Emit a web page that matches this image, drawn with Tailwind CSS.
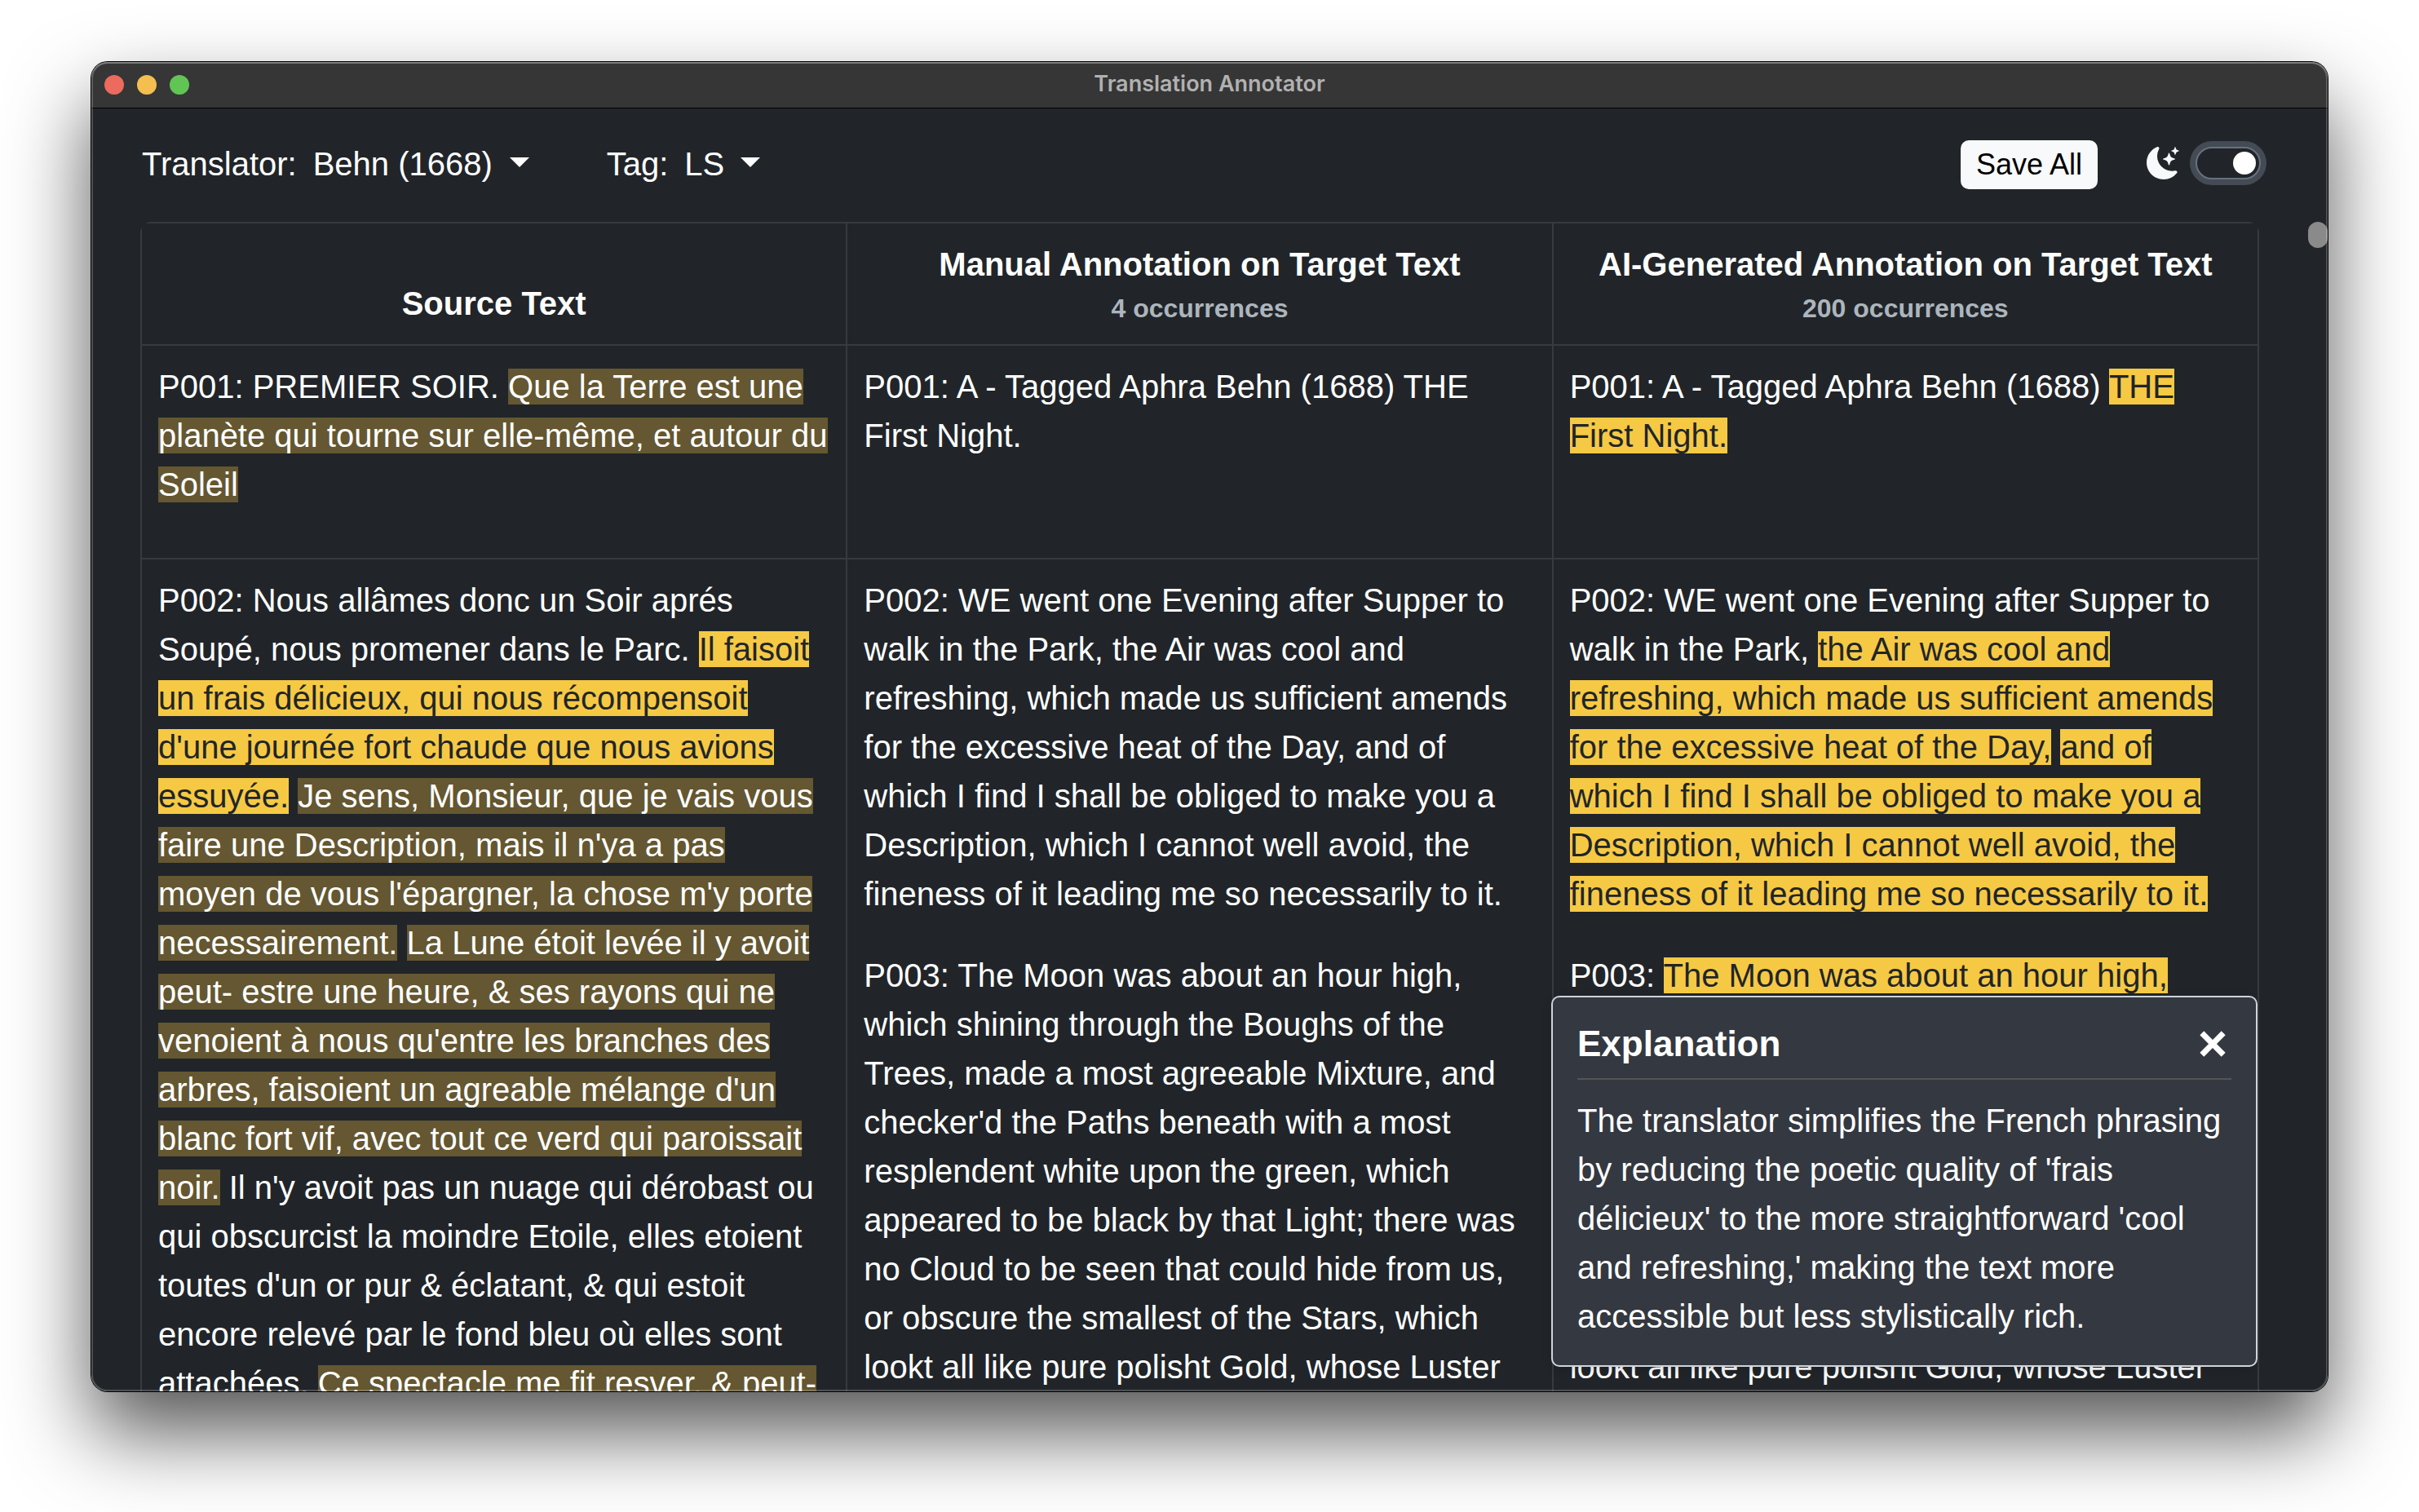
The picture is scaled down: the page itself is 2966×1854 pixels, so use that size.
<!DOCTYPE html>
<html lang="en">
<head>
<meta charset="utf-8">
<meta name="viewport" content="width=device-width, initial-scale=1">
<title>Translation Annotator</title>
<script src="https://cdn.jsdelivr.net/npm/@tailwindcss/browser@4"></script>
</head>
<body class="flex h-screen overflow-hidden bg-white px-[112px] pt-[76px] pb-[148px] font-['Liberation_Sans',Arial,sans-serif] text-[40px] leading-[60px] text-white">
<div class="relative flex min-w-0 flex-1 rounded-[20px] shadow-[0_0_0_1px_#000,0_50px_100px_rgba(0,0,0,0.67)]">
  <div class="flex min-w-0 flex-1 flex-col overflow-hidden rounded-[20px] bg-[#212529]">

    <!-- Title bar -->
    <header class="grid h-[57px] shrink-0 grid-cols-[1fr_auto_1fr] items-center border-b border-black bg-[#363636] px-4">
      <div class="flex gap-4">
        <button aria-label="Close window" class="size-6 rounded-full bg-[#ec6a5e]"></button>
        <button aria-label="Minimize window" class="size-6 rounded-full bg-[#f4bf4f]"></button>
        <button aria-label="Zoom window" class="size-6 rounded-full bg-[#61c554]"></button>
      </div>
      <h1 class="pb-[2px] font-[Inter,sans-serif] text-[27px] leading-8 font-semibold text-[#b1b1b1]">Translation Annotator</h1>
    </header>

    <!-- Toolbar -->
    <div class="flex h-[139px] shrink-0 items-center justify-between pr-[82px] pb-[2px] pl-[62px]">
      <div class="flex items-center gap-[95px] pb-[2px]">
        <div class="flex items-center gap-5">
          <label for="translator">Translator:</label>
          <div class="relative">
            <select id="translator" class="block appearance-none bg-transparent pr-[44px]"><option>Behn (1668)</option></select>
            <svg class="pointer-events-none absolute top-[22px] right-0 h-3 w-6" viewBox="0 0 24 12" fill="currentColor"><path d="M0 0h24L12 12z"/></svg>
          </div>
        </div>
        <div class="flex items-center gap-5">
          <label for="tag">Tag:</label>
          <div class="relative">
            <select id="tag" class="block appearance-none bg-transparent pr-[44px]"><option>LS</option></select>
            <svg class="pointer-events-none absolute top-[22px] right-0 h-3 w-6" viewBox="0 0 24 12" fill="currentColor"><path d="M0 0h24L12 12z"/></svg>
          </div>
        </div>
      </div>
      <div class="flex items-center gap-[60px]">
        <button class="h-[60px] rounded-[10px] bg-[#f8f9fa] px-[19px] text-[36px] leading-[52px] text-black">Save All</button>
        <div class="flex items-center gap-5 pb-1">
          <svg class="size-10 text-[#f8f9fa]" viewBox="0 0 16 16" fill="currentColor"><path d="M6 .278a.77.77 0 0 1 .08.858 7.2 7.2 0 0 0-.878 3.46c0 4.021 3.278 7.277 7.318 7.277q.792-.001 1.533-.16a.79.79 0 0 1 .81.316.73.73 0 0 1-.031.893A8.35 8.35 0 0 1 8.344 16C3.734 16 0 12.286 0 7.71 0 4.266 2.114 1.312 5.124.06A.75.75 0 0 1 6 .278"/><path d="M10.794 3.148a.217.217 0 0 1 .412 0l.387 1.162c.173.518.579.924 1.097 1.097l1.162.387a.217.217 0 0 1 0 .412l-1.162.387a1.73 1.73 0 0 0-1.097 1.097l-.387 1.162a.217.217 0 0 1-.412 0l-.387-1.162A1.73 1.73 0 0 0 9.31 6.593l-1.162-.387a.217.217 0 0 1 0-.412l1.162-.387a1.73 1.73 0 0 0 1.097-1.097zM13.863.099a.145.145 0 0 1 .274 0l.258.774c.115.346.386.617.732.732l.774.258a.145.145 0 0 1 0 .274l-.774.258a1.16 1.16 0 0 0-.732.732l-.258.774a.145.145 0 0 1-.274 0l-.258-.774a1.16 1.16 0 0 0-.732-.732l-.774-.258a.145.145 0 0 1 0-.274l.774-.258c.346-.115.617-.386.732-.732z"/></svg>
          <input type="checkbox" role="switch" checked aria-label="Dark mode" class="flex h-10 w-20 appearance-none items-center justify-end rounded-full border-2 border-[#66727f] bg-[#212529] px-1 shadow-[0_0_0_7px_#444b54] before:size-7 before:rounded-full before:bg-white before:content-['']">
        </div>
      </div>
    </div>

    <!-- Text comparison -->
    <main class="relative flex min-h-0 flex-1 pr-[84px] pl-[60px]">
      <div class="relative min-w-0 flex-1 overflow-hidden rounded-t-[14px]">
        <table class="w-full table-fixed border-collapse [&_td]:border-2 [&_td]:border-[#373b3e] [&_td]:p-5 [&_td]:align-top [&_th]:border-2 [&_th]:border-[#373b3e] [&_th]:p-5 [&_th]:align-bottom [&_p]:mb-10">
          <thead>
            <tr>
              <th>Source Text</th>
              <th>Manual Annotation on Target Text<div class="text-[32px] leading-[48px] text-[#adb5bd]">4 occurrences</div></th>
              <th>AI-Generated Annotation on Target Text<div class="text-[32px] leading-[48px] text-[#adb5bd]">200 occurrences</div></th>
            </tr>
          </thead>
          <tbody>
            <tr>
              <td lang="fr"><p>P001: PREMIER SOIR. <mark class="bg-[#645731] text-white">Que la Terre est une planète qui tourne sur elle-même, et autour du Soleil</mark></p></td>
              <td><p>P001: A - Tagged Aphra Behn (1688) THE First Night.</p></td>
              <td><p>P001: A - Tagged Aphra Behn (1688) <mark class="bg-[#f6c944] text-[#212529]">THE First Night.</mark></p></td>
            </tr>
            <tr>
              <td lang="fr"><p>P002: Nous allâmes donc un Soir aprés Soupé, nous promener dans le Parc. <mark class="bg-[#f6c944] text-[#212529]">Il faisoit un frais délicieux, qui nous récompensoit d'une journée fort chaude que nous avions essuyée.</mark> <mark class="bg-[#645731] text-white">Je sens, Monsieur, que je vais vous faire une Description, mais il n'ya a pas moyen de vous l'épargner, la chose m'y porte necessairement.</mark> <mark class="bg-[#645731] text-white">La Lune étoit levée il y avoit peut- estre une heure, &amp; ses rayons qui ne venoient à nous qu'entre les branches des arbres, faisoient un agreable mélange d'un blanc fort vif, avec tout ce verd qui paroissait noir.</mark> Il n'y avoit pas un nuage qui dérobast ou qui obscurcist la moindre Etoile, elles etoient toutes d'un or pur &amp; éclatant, &amp; qui estoit encore relevé par le fond bleu où elles sont attachées. <mark class="bg-[#645731] text-white">Ce spectacle me fit resver, &amp; peut-</mark></p></td>
              <td>
                <p>P002: WE went one Evening after Supper to walk in the Park, the Air was cool and refreshing, which made us sufficient amends for the excessive heat of the Day, and of which I find I shall be obliged to make you a Description, which I cannot well avoid, the fineness of it leading me so necessarily to it.</p>
                <p>P003: The Moon was about an hour high, which shining through the Boughs of the Trees, made a most agreeable Mixture, and checker'd the Paths beneath with a most resplendent white upon the green, which appeared to be black by that Light; there was no Cloud to be seen that could hide from us, or obscure the smallest of the Stars, which lookt all like pure polisht Gold, whose Luster</p>
              </td>
              <td>
                <p>P002: WE went one Evening after Supper to walk in the Park, <mark class="bg-[#f6c944] text-[#212529]">the Air was cool and refreshing, which made us sufficient amends for the excessive heat of the Day,</mark> <mark class="bg-[#f6c944] text-[#212529]">and of which I find I shall be obliged to make you a Description, which I cannot well avoid, the fineness of it leading me so necessarily to it.</mark></p>
                <p>P003: <mark class="bg-[#f6c944] text-[#212529]">The Moon was about an hour high,</mark> which shining through the Boughs of the Trees, made a most agreeable Mixture, and checker'd the Paths beneath with a most resplendent white upon the green, which appeared to be black by that Light; there was no Cloud to be seen that could hide from us, or obscure the smallest of the Stars, which lookt all like pure polisht Gold, whose Luster</p>
              </td>
            </tr>
          </tbody>
        </table>

        <!-- Explanation popup -->
        <section class="absolute right-[2px] bottom-[30px] w-1/3 rounded-[10px] border-2 border-[#ced4da] bg-[#343840] p-[30px] shadow-[0_4px_12px_rgba(0,0,0,0.15)]">
          <div class="flex items-center justify-between border-b-2 border-[#555] pb-4">
            <h2 class="text-[44px] leading-[53px] font-bold">Explanation</h2>
            <button aria-label="Close explanation" class="px-[7px]">
              <svg class="size-8" viewBox="0 0 32 32" fill="none" stroke="currentColor" stroke-width="7" stroke-linecap="butt" stroke-linejoin="round"><path d="M2.8 2.8l26.4 26.4M29.2 2.8L2.8 29.2"/></svg>
            </button>
          </div>
          <p class="pt-5">The translator simplifies the French phrasing by reducing the poetic quality of 'frais délicieux' to the more straightforward 'cool and refreshing,' making the text more accessible but less stylistically rich.</p>
        </section>
      </div>
      <div class="absolute top-0 right-0 h-8 w-6 rounded-full bg-[#8a8a8a]"></div>
    </main>
  </div>
  <!-- Window edge highlight -->
  <div class="pointer-events-none absolute inset-0 rounded-[20px] shadow-[inset_0_0_0_2px_rgba(255,255,255,0.2),inset_0_2px_0_rgba(255,255,255,0.2)]"></div>
</div>
</body>
</html>
